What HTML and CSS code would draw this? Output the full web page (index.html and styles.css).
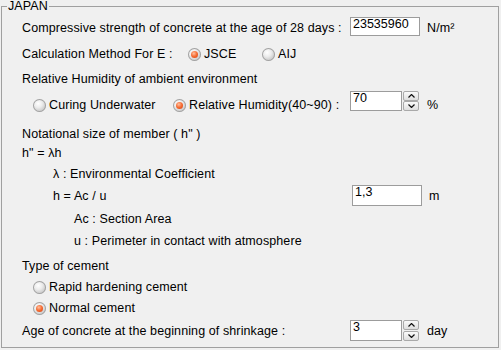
FILE: index.html
```html
<!DOCTYPE html>
<html>
<head>
<meta charset="utf-8">
<link rel="stylesheet" href="styles.css">
</head>
<body>
<div class="page">
  <fieldset class="group">
    <legend>JAPAN</legend>
    <div class="form">
      <div class="row">
        <span class="lbl lbl-field">Compressive strength of concrete at the age of 28 days :</span>
        <div class="box field">23535960</div>
        <span class="unit">N/m²</span>
      </div>
      <div class="row">
        <span class="lbl lbl-calc">Calculation Method For E :</span>
        <label class="opt opt-jsce"><span class="radio on"></span>JSCE</label>
        <label class="opt"><span class="radio"></span>AIJ</label>
      </div>
      <div class="row">
        <span class="lbl">Relative Humidity of ambient environment</span>
      </div>
      <div class="row ind1">
        <label class="opt opt-curing"><span class="radio"></span>Curing Underwater</label>
        <label class="opt opt-rh"><span class="radio on"></span>Relative Humidity(40~90) :</label>
        <div class="spin field field-up">
          <div class="box spin-box">70</div>
          <div class="spin-btns">
            <span class="spin-btn"><svg width="7" height="4" viewBox="0 0 7 4"><polyline points="0.5,3.5 3.5,0.5 6.5,3.5" fill="none" stroke="#111" stroke-width="1.2"/></svg></span>
            <span class="spin-btn"><svg width="7" height="4" viewBox="0 0 7 4"><polyline points="0.5,0.5 3.5,3.5 6.5,0.5" fill="none" stroke="#111" stroke-width="1.2"/></svg></span>
          </div>
        </div>
        <span class="unit">%</span>
      </div>
      <div class="row">
        <span class="lbl">Notational size of member ( h" )</span>
      </div>
      <div class="row">
        <span class="lbl">h" = λh</span>
      </div>
      <div class="row ind2">
        <span class="lbl">λ : Environmental Coefficient</span>
      </div>
      <div class="row ind2">
        <span class="lbl lbl-h">h = Ac / u</span>
        <div class="box field field-h">1,3</div>
        <span class="unit">m</span>
      </div>
      <div class="row ind3">
        <span class="lbl">Ac : Section Area</span>
      </div>
      <div class="row ind3">
        <span class="lbl">u : Perimeter in contact with atmosphere</span>
      </div>
      <div class="row">
        <span class="lbl">Type of cement</span>
      </div>
      <div class="row ind1">
        <label class="opt"><span class="radio"></span>Rapid hardening cement</label>
      </div>
      <div class="row ind1">
        <label class="opt"><span class="radio on"></span>Normal cement</label>
      </div>
      <div class="row">
        <span class="lbl lbl-field">Age of concrete at the beginning of shrinkage :</span>
        <div class="spin field field-tall">
          <div class="box spin-box">3</div>
          <div class="spin-btns">
            <span class="spin-btn"><svg width="7" height="4" viewBox="0 0 7 4"><polyline points="0.5,3.5 3.5,0.5 6.5,3.5" fill="none" stroke="#111" stroke-width="1.2"/></svg></span>
            <span class="spin-btn"><svg width="7" height="4" viewBox="0 0 7 4"><polyline points="0.5,0.5 3.5,3.5 6.5,0.5" fill="none" stroke="#111" stroke-width="1.2"/></svg></span>
          </div>
        </div>
        <span class="unit">day</span>
      </div>
    </div>
  </fieldset>
</div>
</body>
</html>
```

FILE: styles.css
```css
* { box-sizing: border-box; }
html, body { margin: 0; padding: 0; background: #f0f0f0; }
body {
  font-family: "Liberation Sans", Arial, sans-serif;
  font-size: 12.5px;
  line-height: 15px;
  letter-spacing: 0.1px;
  color: #000;
}
.page {
  width: 501px;
  height: 350px;
  padding: 0 2px 0 1px;
}
.group {
  margin: 0;
  padding: 0;
  border: 1px solid #a0a0a0;
  min-width: 0;
}
.group legend {
  margin-left: 5px;
  padding: 0 1px;
  line-height: 12px;
}
.form {
  display: grid;
  grid-template-rows: 26px 25px 26px 29px 19px 21px 22px 23px 22px 25px 21px 21px 23px 15px;
  padding: 9px 0 8px 20px;
}
.row {
  display: flex;
  align-items: flex-start;
  white-space: nowrap;
}
.ind1 { padding-left: 11px; }
.ind2 { padding-left: 31px; }
.ind3 { padding-left: 52px; }

.lbl-field { width: 328px; }
.lbl-calc { width: 166px; }
.lbl-h { width: 299px; }

.opt { display: inline-flex; align-items: flex-start; }
.opt-jsce { width: 74px; }
.opt-curing { width: 140px; }
.opt-rh { width: 177px; }

.radio {
  width: 13px;
  height: 13px;
  margin: 1px 3px 0 0;
  border-radius: 50%;
  display: flex;
  align-items: center;
  justify-content: center;
  background: radial-gradient(circle at 40% 35%, #ffffff 0%, #ececec 35%, #c4c4c4 75%, #9a9a9a 100%);
  box-shadow: inset 0 0 0 1px #a2a2a2;
}
.radio.on::after {
  content: "";
  width: 7px;
  height: 7px;
  border-radius: 50%;
  background: radial-gradient(circle at 40% 35%, #ffc0a0 0%, #f56a30 50%, #cf3f12 100%);
}

.box {
  background: #fff;
  border: 1px solid #9c9c9c;
  padding: 0 2px;
  line-height: 12px;
  height: 19px;
  letter-spacing: 0;
}
.field { margin-top: -4px; }
.field-up { margin-top: -7px; }
.box.field { width: 70px; }
.field-h { height: 21px; }
.unit { margin-left: 7px; }

.spin { display: flex; width: 70px; }
.spin-box { width: 52px; height: 20px; }
.field-tall .spin-box { height: 21px; }
.spin-btns {
  display: flex;
  flex-direction: column;
  justify-content: space-between;
  margin-left: 1px;
  width: 16px;
}
.spin-btn {
  height: 10px;
  display: flex;
  align-items: center;
  justify-content: center;
  border: 1px solid #a9a9a9;
  border-radius: 2px;
  background: linear-gradient(#fafafa, #dedede);
}
```
